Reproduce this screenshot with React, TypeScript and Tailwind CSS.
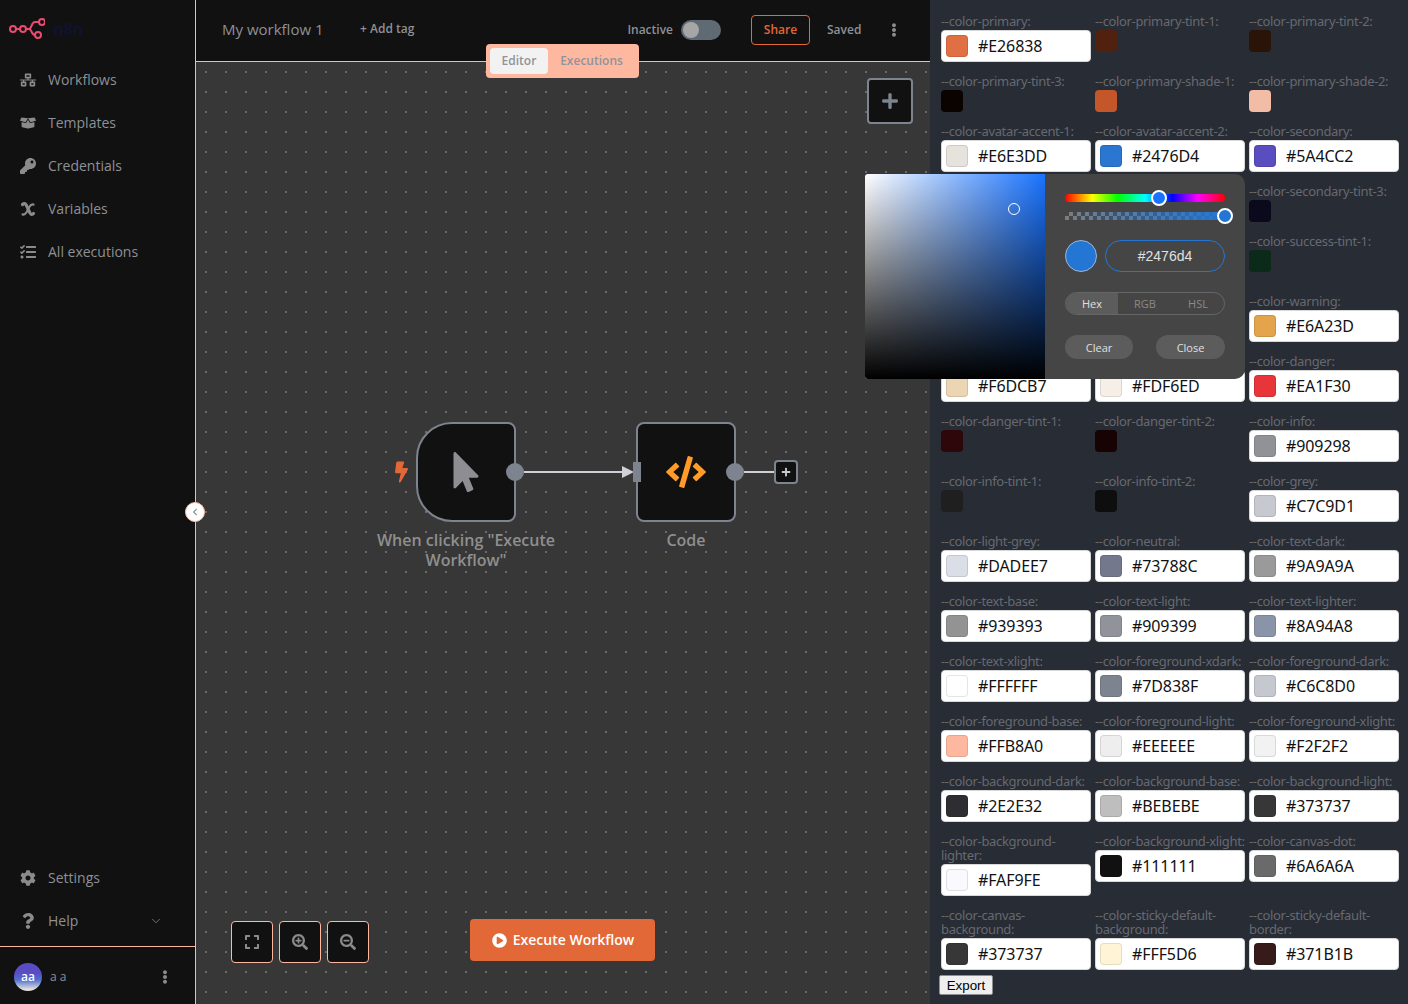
import React from "react";
import {
  FaBolt,
  FaBoxOpen,
  FaChevronLeft,
  FaCode,
  FaCog,
  FaEllipsisV,
  FaExpand,
  FaKey,
  FaMousePointer,
  FaNetworkWired,
  FaPlayCircle,
  FaPlus,
  FaQuestion,
  FaSearchMinus,
  FaSearchPlus,
  FaTasks,
} from "react-icons/fa";
import { ChevronDown } from "lucide-react";

const VariableIcon: React.FC<{ className?: string }> = ({ className }) => (
  <svg viewBox="0 0 16 16" className={className} fill="none" stroke="currentColor" strokeLinecap="round">
    <path d="M2.5 3.5c1.4-1.4 3-1 3.8.6l3.6 7.8c.8 1.6 2.4 2 3.6.6" strokeWidth="3.2" />
    <path d="M2.5 13.4c1.8.6 3-.4 4.2-2.4l2.6-5c1.2-2 2.4-3 4.2-2.4" strokeWidth="2.2" />
  </svg>
);

const Logo = () => (
  <svg width="36" height="24" viewBox="0 0 36 24" fill="none" stroke="#ea4b71" strokeWidth="2">
    <circle cx="4" cy="12" r="3" />
    <circle cx="14" cy="12" r="3" />
    <circle cx="33" cy="5" r="3" />
    <circle cx="29" cy="18" r="3" />
    <path d="M7 12h4M17 12h3c3 0 2-7 6-7h4M20 12c3 0 2 6 6 6" />
  </svg>
);

const topMenu = [
  { icon: FaNetworkWired, label: "Workflows" },
  { icon: FaBoxOpen, label: "Templates" },
  { icon: FaKey, label: "Credentials" },
  { icon: VariableIcon, label: "Variables" },
  { icon: FaTasks, label: "All executions" },
];

const MenuRow: React.FC<{ icon: React.ElementType; label: string; children?: React.ReactNode }> = ({
  icon: Icon,
  label,
  children,
}) => (
  <div className="flex h-[43px] items-center pl-5 pr-[32px] text-[#8d9096]">
    <Icon className="h-4 w-4 shrink-0 text-[#8b8b8b]" />
    <span className="ml-3 flex-1 text-sm leading-none">{label}</span>
    {children}
  </div>
);

const Sidebar = () => (
  <aside className="relative z-10 flex h-full w-[196px] shrink-0 flex-col border-r border-[#ffb8a0] bg-[#111111]">
    <div className="flex h-[58px] items-center pl-[9px]">
      <Logo />
      <span className="ml-2 text-base font-bold leading-none text-[#101330]">n8n</span>
    </div>
    {topMenu.map((item) => (
      <MenuRow key={item.label} {...item} />
    ))}
    <div className="flex-1" />
    <MenuRow icon={FaCog} label="Settings" />
    <MenuRow icon={FaQuestion} label="Help">
      <ChevronDown className="h-[14px] w-[14px] text-[#7f7f7f]" strokeWidth={1.5} />
    </MenuRow>
    <div className="mt-1 flex h-[58px] items-center border-t border-[#ffb8a0] pl-[14px] pr-[23px] pt-[2px]">
      <div className="flex h-7 w-7 items-center justify-center rounded-full bg-[linear-gradient(to_bottom,#5a4cc2_35%,#4f6fd0_60%,#e6e3dd_95%)] text-xs font-semibold text-white">
        aa
      </div>
      <span className="ml-2 flex-1 text-xs text-[#8d9096]">a a</span>
      <FaEllipsisV className="h-[14px] w-[14px] text-[#8b8b8b]" />
    </div>
    <div className="absolute left-[185px] top-[502px] flex h-5 w-5 items-center justify-center rounded-full border border-[#ffb8a0] bg-white text-[#8d9096]">
      <FaChevronLeft className="h-2 w-2" />
    </div>
  </aside>
);

const Header = () => (
  <header className="flex h-[62px] shrink-0 items-center border-b border-[#ffb8a0] bg-[#111111] pb-[2px] pl-[26px] pr-[29px]">
    <span className="w-[138px] text-[15px] text-[#8d9096]">My workflow 1</span>
    <span className="-mt-[1px] text-xs font-semibold text-[#8d9096]">+ Add tag</span>
    <div className="flex-1" />
    <span className="text-xs font-semibold text-[#8d9096]">Inactive</span>
    <div className="ml-2 flex h-5 w-10 items-center rounded-full bg-[#5f6a75] pl-[2px]">
      <div className="h-4 w-4 rounded-full bg-[#a6a6a6]" />
    </div>
    <button className="ml-[30px] h-[30px] w-[59px] rounded border border-[#e26838] text-xs font-semibold text-[#e26838]">
      Share
    </button>
    <span className="ml-[17px] w-[34px] text-xs font-semibold text-[#8d9096]">Saved</span>
    <FaEllipsisV className="ml-[26px] h-[14px] w-[14px] text-[#8b8b8b]" />
  </header>
);

const ToolButton: React.FC<{ children: React.ReactNode }> = ({ children }) => (
  <div className="flex h-[42px] w-[42px] items-center justify-center rounded border border-[#ffb8a0] bg-[#111111] text-[#8b8b8b]">
    {children}
  </div>
);

const Canvas = () => (
  <main className="relative flex-1 bg-[#373737] bg-[radial-gradient(circle,#6a6a6a_1px,transparent_1.2px)] bg-[size:20px_20px]">
    {/* tabs hang over the header line */}
    <div className="absolute left-[290px] top-[-18px] flex h-[34px] w-[153px] items-center rounded bg-[#ffb8a0] p-1 text-xs font-semibold text-[#909399]">
      <div className="flex h-[26px] w-[58px] items-center justify-center rounded bg-[#f2f2f2]">Editor</div>
      <div className="flex flex-1 items-center justify-center">Executions</div>
    </div>

    <div className="absolute left-[671px] top-[16px] flex h-[46px] w-[46px] items-center justify-center rounded border-2 border-[#7d838f] bg-[#111111] text-[#7d838f]">
      <FaPlus className="h-[18px] w-[18px]" />
    </div>

    {/* trigger node */}
    <FaBolt className="absolute left-[199px] top-[399px] h-[22px] w-[13px] text-[#e26838]" />
    <div className="absolute left-[220px] top-[360px] flex h-[100px] w-[100px] items-center justify-center rounded-r-lg rounded-l-[36px] border-2 border-[#7d838f] bg-[#111111] text-[#8e8e92]">
      <FaMousePointer className="h-10 w-10" />
    </div>
    <div className="absolute left-[310px] top-[401px] h-[18px] w-[18px] rounded-full bg-[#7d838f]" />
    <div className="absolute left-[328px] top-[409px] h-[2px] w-[98px] bg-[#cfd1d6]" />
    <div className="absolute left-[426px] top-[404px] h-0 w-0 border-y-[6px] border-l-[12px] border-y-transparent border-l-[#cfd1d6]" />
    <div className="absolute left-[170px] top-[468px] w-[200px] text-center text-base font-semibold leading-5 text-[#8f8f8f]">
      When clicking "Execute Workflow"
    </div>

    {/* code node */}
    <div className="absolute left-[440px] top-[360px] flex h-[100px] w-[100px] items-center justify-center rounded-lg border-2 border-[#7d838f] bg-[#111111] text-[#ff9b26]">
      <FaCode className="h-10 w-10" />
    </div>
    <div className="absolute left-[437px] top-[400px] h-5 w-2 bg-[#7d838f]" />
    <div className="absolute left-[530px] top-[401px] h-[18px] w-[18px] rounded-full bg-[#7d838f]" />
    <div className="absolute left-[548px] top-[409px] h-[2px] w-[30px] bg-[#cfd1d6]" />
    <div className="absolute left-[578px] top-[398px] flex h-6 w-6 items-center justify-center rounded border-2 border-[#7d838f] bg-[#111111] text-[#c6c8d0]">
      <FaPlus className="h-[10px] w-[10px]" />
    </div>
    <div className="absolute left-[440px] top-[468px] w-[100px] text-center text-base font-semibold leading-5 text-[#8f8f8f]">
      Code
    </div>

    {/* bottom controls */}
    <div className="absolute left-[35px] top-[859px] flex gap-[6px]">
      <ToolButton>
        <FaExpand className="h-4 w-4" />
      </ToolButton>
      <ToolButton>
        <FaSearchPlus className="h-4 w-4" />
      </ToolButton>
      <ToolButton>
        <FaSearchMinus className="h-4 w-4" />
      </ToolButton>
    </div>
    <button className="absolute left-[274px] top-[857px] flex h-[42px] w-[185px] items-center justify-center gap-[6px] rounded bg-[#e26838] pl-[1px] text-sm font-semibold text-white">
      <FaPlayCircle className="h-[15px] w-[15px]" />
      Execute Workflow
    </button>
  </main>
);

type ColorVar = { name: string; color: string; showValue?: boolean; fill?: string };

// fill: the swatch in the shot is a bit duller than the value it prints
const v = (name: string, color: string, fill?: string): ColorVar => ({ name, color, showValue: true, fill });
const s = (name: string, color: string): ColorVar => ({ name, color });

const colorVars: ColorVar[] = [
  v("primary", "#E26838", "#E16F44"),
  s("primary-tint-1", "#51210F"),
  s("primary-tint-2", "#2A1307"),
  s("primary-tint-3", "#0B0300"),
  s("primary-shade-1", "#C5562A"),
  s("primary-shade-2", "#F2BCA6"),
  v("avatar-accent-1", "#E6E3DD"),
  v("avatar-accent-2", "#2476D4", "#2A76D0"),
  v("secondary", "#5A4CC2", "#5A4DBF"),
  s("secondary-tint-1", "#1A1640"),
  s("secondary-tint-2", "#100E2A"),
  s("secondary-tint-3", "#0A0A1C"),
  v("success", "#29A568"),
  s("success-light", "#2AB56E"),
  s("success-tint-1", "#0B2A1A"),
  s("success-tint-2", "#071C11"),
  s("success-tint-3", "#04100A"),
  v("warning", "#E6A23D", "#E3A44C"),
  v("warning-tint-1", "#F6DCB7", "#EBD5B3"),
  v("warning-tint-2", "#FDF6ED", "#F5EFE8"),
  v("danger", "#EA1F30", "#E73539"),
  s("danger-tint-1", "#2D070A"),
  s("danger-tint-2", "#170304"),
  v("info", "#909298"),
  s("info-tint-1", "#1F1F20"),
  s("info-tint-2", "#0E0E0F"),
  v("grey", "#C7C9D1"),
  v("light-grey", "#DADEE7"),
  v("neutral", "#73788C"),
  v("text-dark", "#9A9A9A"),
  v("text-base", "#939393"),
  v("text-light", "#909399"),
  v("text-lighter", "#8A94A8"),
  v("text-xlight", "#FFFFFF"),
  v("foreground-xdark", "#7D838F"),
  v("foreground-dark", "#C6C8D0"),
  v("foreground-base", "#FFB8A0"),
  v("foreground-light", "#EEEEEE"),
  v("foreground-xlight", "#F2F2F2"),
  v("background-dark", "#2E2E32"),
  v("background-base", "#BEBEBE"),
  v("background-light", "#373737"),
  v("background-lighter", "#FAF9FE"),
  v("background-xlight", "#111111"),
  v("canvas-dot", "#6A6A6A"),
  v("canvas-background", "#373737"),
  v("sticky-default-background", "#FFF5D6"),
  v("sticky-default-border", "#371B1B"),
];

const ColorCell: React.FC<ColorVar> = ({ name, color, showValue, fill }) => (
  <div className="min-w-0">
    <div className="mb-[2px] text-[13px] leading-[14px] tracking-[-0.35px] text-[#66696f]">
      --color-{name}:
    </div>
    {showValue ? (
      <div className="flex h-8 items-center rounded-[4px] border border-[#d8d8d8] bg-white pl-[4px]">
        <div
          className="h-[22px] w-[22px] shrink-0 rounded border border-black/10"
          style={{ backgroundColor: fill ?? color }}
        />
        <span className="ml-[10px] text-base tracking-[-0.1px] text-[#111111]">{color}</span>
      </div>
    ) : (
      <div className="h-[22px] w-[22px] rounded" style={{ backgroundColor: color }} />
    )}
  </div>
);

const ColorPanel = () => (
  <section className="relative w-[478px] shrink-0 overflow-hidden bg-[#282c35] pl-[11px] pt-[14px] font-['Noto_Sans',sans-serif]">
    <div className="grid grid-cols-[150px_150px_150px] items-start gap-x-1 gap-y-3">
      {colorVars.map((item) => (
        <ColorCell key={item.name} {...item} />
      ))}
    </div>
    <button className="ml-[-2px] mt-[5px] h-5 w-[54px] rounded-[2px] border border-[#8f8f8f] bg-[#efefef] pt-[1px] font-['Liberation_Sans',sans-serif] text-[13.33px] leading-none text-black">
      Export
    </button>
  </section>
);

const ColorPicker = () => (
  <div className="absolute left-[865px] top-[174px] z-20 flex h-[205px] w-[380px] overflow-hidden rounded-l-[3px] rounded-r-[10px] bg-[#454545]">
    <div className="relative h-full w-[180px] bg-[linear-gradient(to_top,#000,transparent),linear-gradient(to_right,#fff,#1a73ff)]">
      <div className="absolute left-[143px] top-[29px] h-3 w-3 rounded-full border border-white" />
    </div>
    <div className="relative flex-1 px-5 pt-5">
      <div className="relative h-2 rounded-full bg-[linear-gradient(to_right,#f00,#ff0_17%,#0f0_33%,#0ff_50%,#00f_67%,#f0f_83%,#f00)]">
        <div className="absolute left-[86px] top-[-4px] h-4 w-4 rounded-full border-2 border-white bg-[#1a73ff]" />
      </div>
      <div className="relative mt-[10px] h-2 bg-[linear-gradient(to_right,transparent,#2476d4),repeating-conic-gradient(#7d7d7d_0_25%,transparent_0_50%)] bg-[size:100%_100%,8px_8px]">
        <div className="absolute left-[152px] top-[-4px] h-4 w-4 rounded-full border-2 border-white bg-[#2476d4]" />
      </div>
      <div className="mt-5 flex gap-2">
        <div className="h-8 w-8 rounded-full border border-[#9fb4d0] bg-[#2476d4]" />
        <div className="flex h-8 flex-1 items-center justify-center rounded-full border border-[#2476d4] font-['Liberation_Sans',sans-serif] text-sm text-[#e0e0e0]">
          #2476d4
        </div>
      </div>
      <div className="mt-5 flex h-[23px] overflow-hidden rounded-full border border-[#666666] text-[11px] text-[#8a8a8a]">
        <div className="flex w-[52px] items-center justify-center bg-[#5c5c5c] pt-[1px] text-[#e0e0e0]">Hex</div>
        <div className="flex flex-1 items-center justify-center pl-[1px] pt-[1px]">RGB</div>
        <div className="flex flex-1 items-center justify-center pl-[1px] pt-[1px]">HSL</div>
      </div>
      <div className="mt-5 flex justify-between text-[11px] text-[#e0e0e0]">
        <div className="flex h-6 w-[68px] items-center justify-center rounded-full bg-[#5c5c5c] pt-[2px]">Clear</div>
        <div className="flex h-6 w-[69px] items-center justify-center rounded-full bg-[#5c5c5c] pt-[2px]">Close</div>
      </div>
    </div>
  </div>
);

export default function App() {
  return (
    <div className="relative flex h-[1004px] w-[1408px] overflow-hidden font-['Open_Sans',sans-serif]">
      <Sidebar />
      <div className="flex min-w-0 flex-1 flex-col">
        <Header />
        <Canvas />
      </div>
      <ColorPanel />
      <ColorPicker />
    </div>
  );
}
